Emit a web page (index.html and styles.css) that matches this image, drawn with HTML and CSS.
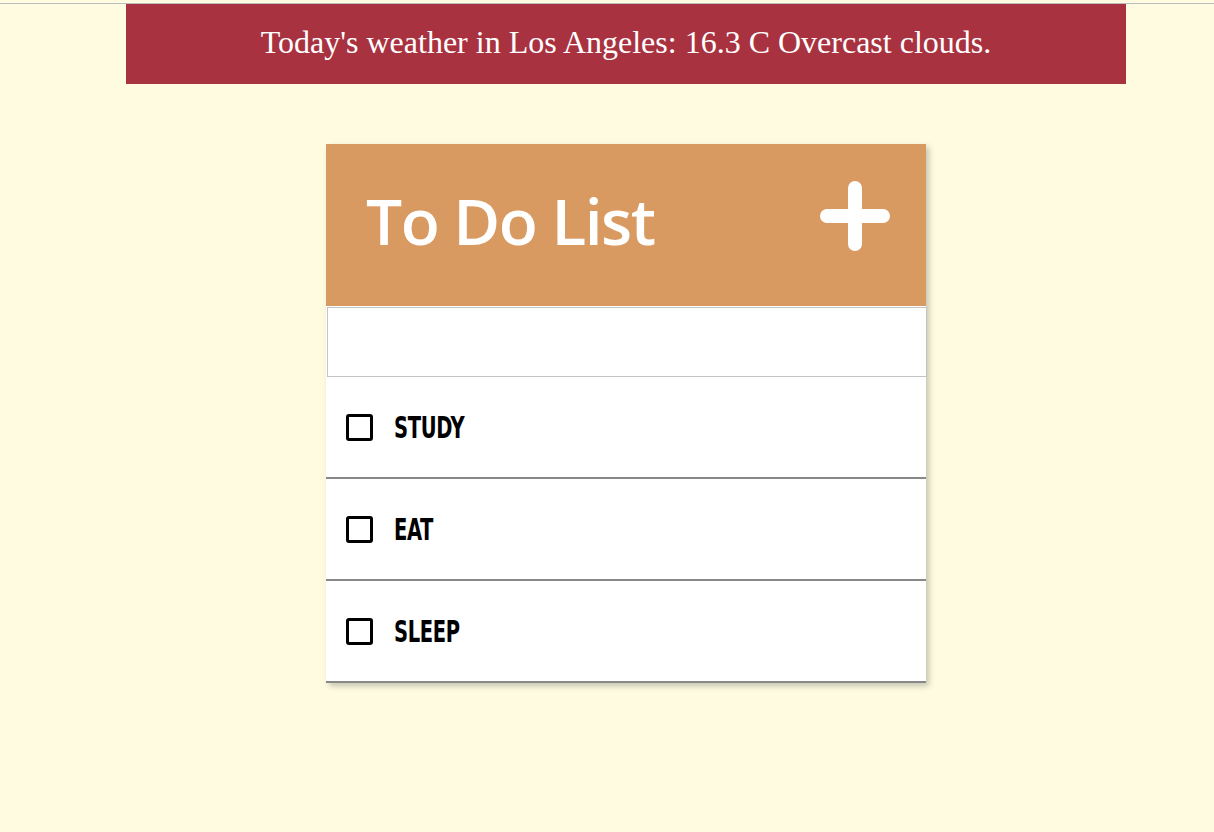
FILE: index.html
```html
<!DOCTYPE html>
<html>
<head>
<meta charset="utf-8">
<title>To Do List</title>
<link rel="stylesheet" href="styles.css">
</head>
<body>
<div class="page">
  <div class="weather">Today's weather in Los Angeles: 16.3 C Overcast clouds.</div>
  <div class="card">
    <div class="card-head">
      <h1 class="title">To Do List</h1>
      <svg class="plus" width="70" height="70" viewBox="0 0 70 70" aria-hidden="true">
        <path d="M35 7 V63 M7 35 H63" stroke="#fff" stroke-width="14" stroke-linecap="round" fill="none"/>
      </svg>
    </div>
    <input class="new-item" type="text">
    <ul class="items">
      <li class="item"><span class="box"></span><span class="label">STUDY</span></li>
      <li class="item"><span class="box"></span><span class="label">EAT</span></li>
      <li class="item"><span class="box"></span><span class="label">SLEEP</span></li>
    </ul>
  </div>
</div>
</body>
</html>
```

FILE: styles.css
```css
html, body {
  margin: 0;
  padding: 0;
  background: #fefbe1;
}
.page {
  margin-top: 3px;
  border-top: 1px solid #bdbdbd;
  display: flex;
  flex-direction: column;
  align-items: center;
  padding-left: 38px;
  min-height: 828px;
}
.weather {
  width: 1000px;
  height: 80px;
  box-sizing: border-box;
  background: #a93240;
  color: #fff;
  font-family: "Liberation Serif", "Times New Roman", serif;
  font-size: 32px;
  display: flex;
  align-items: center;
  justify-content: center;
  padding-bottom: 3px;
}
.card {
  width: 600px;
  margin-top: 60px;
  background: #fff;
  box-shadow: 3px 3px 6px rgba(0, 0, 0, 0.22);
}
.card-head {
  height: 162px;
  background: #d99a62;
  display: flex;
  align-items: center;
  justify-content: space-between;
  padding: 0 36px 0 40px;
}
.title {
  margin: 0 0 8px 0;
  color: #fff;
  font-family: "Open Sans", "Noto Sans", sans-serif;
  font-weight: 600;
  font-size: 64px;
  letter-spacing: -1.5px;
  line-height: 1;
}
.plus {
  display: block;
  margin-bottom: 18px;
}
.new-item {
  display: block;
  width: 600px;
  height: 70px;
  margin: 1px 0 0 1px;
  box-sizing: border-box;
  border: 1px solid #c4c4c4;
  outline: none;
  background: #fff;
  font-size: 20px;
}
.items {
  list-style: none;
  margin: 0;
  padding: 0;
}
.item {
  height: 100px;
  border-bottom: 2px solid #888;
  display: flex;
  align-items: center;
  padding-left: 20px;
}
.box {
  width: 27px;
  height: 27px;
  box-sizing: border-box;
  border: 3px solid #000;
  border-radius: 3px;
  margin-right: 21px;
  margin-top: 1px;
}
.label {
  font-family: "DejaVu Sans Condensed", "DejaVu Sans", sans-serif;
  font-stretch: condensed;
  font-weight: bold;
  font-size: 31px;
  color: #000;
  display: inline-block;
  transform: scaleX(0.7);
  transform-origin: left center;
  letter-spacing: -0.5px;
}
```
